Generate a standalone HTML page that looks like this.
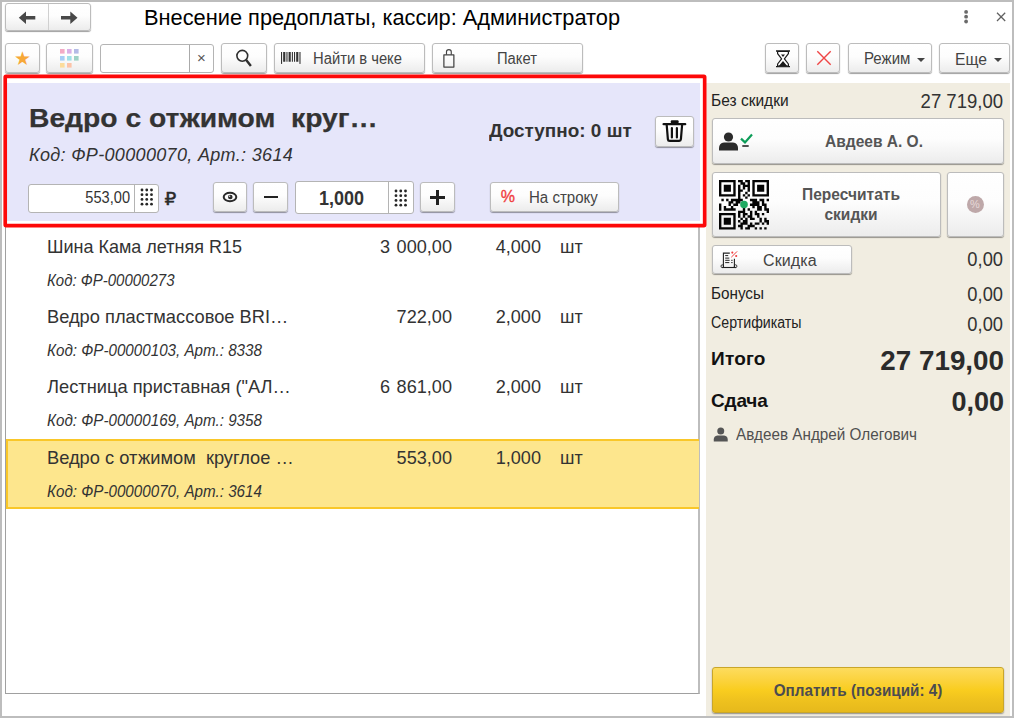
<!DOCTYPE html>
<html lang="ru">
<head>
<meta charset="utf-8">
<title>Внесение предоплаты</title>
<style>
html,body{margin:0;padding:0;}
body{width:1014px;height:718px;overflow:hidden;background:#fff;font-family:"Liberation Sans",Arial,sans-serif;color:#333;position:relative;}
.abs{position:absolute;}
#frame{position:absolute;left:0;top:0;width:1014px;height:718px;box-sizing:border-box;border-style:solid;border-color:#bdbdbd;border-width:2px 2px 2px 2px;z-index:50;pointer-events:none;}
.btn{position:absolute;box-sizing:border-box;border:1px solid #bcbcbc;border-radius:3px;background:linear-gradient(#ffffff 0%,#fdfdfd 45%,#ececec 100%);box-shadow:0 1px 1px rgba(0,0,0,.38);}
.inp{position:absolute;box-sizing:border-box;border:1px solid #b4b4b4;border-radius:3px;background:#fff;}
.t{position:absolute;white-space:pre;line-height:1;}
.r{text-align:right;}
svg{position:absolute;overflow:visible;}
</style>
</head>
<body>

<!-- ===== header ===== -->
<div class="btn" style="left:5px;top:2.8px;width:86px;height:28.2px;"></div>
<div class="abs" style="left:48px;top:4px;width:1px;height:26px;background:#d0d0d0;"></div>
<svg style="left:5px;top:4px" width="86" height="27" viewBox="0 0 86 27">
  <path d="M13.8 13.7 L21 7.4 L21 12 L30.3 12 L30.3 15.4 L21 15.4 L21 20 Z" fill="#484848"/>
  <path d="M72.5 13.7 L65.3 7.4 L65.3 12 L56 12 L56 15.4 L65.3 15.4 L65.3 20 Z" fill="#484848"/>
</svg>
<div class="t" style="left:144px;top:7px;font-size:21.8px;color:#000;">Внесение предоплаты, кассир: Администратор</div>
<svg style="left:960px;top:8px" width="50" height="20" viewBox="0 0 50 20">
  <circle cx="6.1" cy="3.9" r="1.9" fill="#6a6a6a"/><circle cx="6.1" cy="8.7" r="1.9" fill="#6a6a6a"/><circle cx="6.1" cy="13.5" r="1.9" fill="#6a6a6a"/>
  <path d="M37 4.7 L45.2 13 M45.2 4.7 L37 13" stroke="#606060" stroke-width="1.25" fill="none"/>
</svg>

<!-- ===== toolbar ===== -->
<div class="btn" style="left:5px;top:43px;width:34.5px;height:29.7px;"></div>
<div class="t" style="left:5px;top:49px;width:35px;text-align:center;font-size:19px;color:#f7a838;font-family:'DejaVu Sans',sans-serif;">★</div>
<div class="btn" style="left:46px;top:43px;width:47px;height:29.7px;"></div>
<svg style="left:60px;top:49px" width="20" height="20" viewBox="0 0 20 20">
  <rect x="0" y="0" width="4.6" height="4.6" fill="#f3abc6"/><rect x="7" y="0" width="4.6" height="4.6" fill="#d9b0e6"/><rect x="14" y="0" width="4.6" height="4.6" fill="#b4bbe6"/>
  <rect x="0" y="7" width="4.6" height="4.6" fill="#a6cdf5"/><rect x="7" y="7" width="4.6" height="4.6" fill="#a0e0e6"/><rect x="14" y="7" width="4.6" height="4.6" fill="#9ed2c6"/>
  <rect x="0" y="14" width="4.6" height="4.6" fill="#fcdc9c"/><rect x="7" y="14" width="4.6" height="4.6" fill="#fcc3a8"/>
</svg>
<div class="inp" style="left:99.5px;top:44px;width:114.5px;height:28.5px;"></div>
<div class="abs" style="left:189px;top:44.5px;width:1px;height:27.5px;background:#aaa;"></div>
<div class="t" style="left:190px;top:50px;width:23px;text-align:center;font-size:15px;color:#555;">×</div>
<div class="btn" style="left:221px;top:43px;width:45.5px;height:29.7px;"></div>
<svg style="left:221px;top:44px" width="46" height="28" viewBox="0 0 46 28">
  <circle cx="21.3" cy="11.8" r="5.4" fill="none" stroke="#2e2e2e" stroke-width="1.6"/>
  <path d="M25.2 16 L29.9 21.9" stroke="#2e2e2e" stroke-width="2.4" fill="none"/>
</svg>
<div class="btn" style="left:273.5px;top:43px;width:151px;height:29.7px;"></div>
<svg style="left:281px;top:52px" width="21.7" height="13" viewBox="0 0 20 12" preserveAspectRatio="none">
  <g fill="#333"><rect x="0" y="0" width="1" height="11"/><rect x="2" y="0" width="2" height="9"/><rect x="5" y="0" width="1" height="9"/><rect x="7" y="0" width="2" height="9"/><rect x="10" y="0" width="1" height="9"/><rect x="12" y="0" width="1" height="9"/><rect x="14" y="0" width="2" height="9"/><rect x="17" y="0" width="1" height="11"/></g>
</svg>
<div class="t" style="left:313px;top:51.1px;font-size:16px;color:#444;transform:scaleX(.923);transform-origin:0 0;">Найти в чеке</div>
<div class="btn" style="left:431.5px;top:43px;width:151.5px;height:29.7px;"></div>
<svg style="left:442px;top:48px" width="14.8" height="20.8" viewBox="0 0 14 20">
  <path d="M1.7 6.6 H11.3 V18.3 H1.7 Z" fill="none" stroke="#444" stroke-width="1.2" stroke-linejoin="round"/>
  <path d="M4.2 6.4 V3.6 Q4.2 1.5 6.5 1.5 Q8.8 1.5 8.8 3.6 V6.4" fill="none" stroke="#444" stroke-width="1.1"/>
</svg>
<div class="t" style="left:496.5px;top:51.1px;font-size:16px;color:#444;transform:scaleX(.923);transform-origin:0 0;">Пакет</div>

<div class="btn" style="left:765.2px;top:43px;width:34px;height:29.7px;"></div>
<svg style="left:766px;top:44px" width="34" height="28" viewBox="0 0 34 28">
  <path d="M10 7 H24 M10 22.6 H24" stroke="#1a1a1a" stroke-width="1.4" fill="none"/>
  <path d="M11.6 7.5 V9.6 L15.6 14.8 L11.6 20 V22.2 H22.4 V20 L18.4 14.8 L22.4 9.6 V7.5 Z" fill="#fff" stroke="#1a1a1a" stroke-width="1.2" stroke-linejoin="round"/>
  <path d="M15 10.6 H19 L17 13 Z M12.8 22 L17 17 L21.2 22 Z" fill="#1a1a1a"/>
</svg>
<div class="btn" style="left:806.4px;top:43px;width:34px;height:29.7px;"></div>
<svg style="left:807px;top:44px" width="34" height="28" viewBox="0 0 34 28">
  <path d="M10.3 7.3 L23.7 20.7 M23.7 7.3 L10.3 20.7" stroke="#ef4545" stroke-width="1.4" fill="none"/>
</svg>
<div class="btn" style="left:847.6px;top:43px;width:84.4px;height:29.7px;"></div>
<div class="t" style="left:864px;top:51.1px;font-size:16px;color:#444;transform:scaleX(.94);transform-origin:0 0;">Режим</div>
<div class="abs" style="left:917px;top:57.5px;width:0;height:0;border-left:4px solid transparent;border-right:4px solid transparent;border-top:4px solid #444;"></div>
<div class="btn" style="left:939.3px;top:43px;width:70.3px;height:29.7px;"></div>
<div class="t" style="left:954.8px;top:51px;font-size:16.5px;color:#444;transform:scaleX(.95);transform-origin:0 0;">Еще</div>
<div class="abs" style="left:994px;top:57.5px;width:0;height:0;border-left:4px solid transparent;border-right:4px solid transparent;border-top:4px solid #444;"></div>

<!-- ===== current item panel ===== -->
<div class="abs" style="left:6px;top:82.7px;width:693.8px;height:138.2px;background:#e6e6fa;"></div>
<div class="t" style="left:29px;top:106px;font-size:25px;font-weight:bold;transform:scaleX(1.13);transform-origin:0 0;color:#333;-webkit-text-stroke:.25px #333;">Ведро с отжимом  круг…</div>
<div class="t" style="left:29px;top:146px;font-size:18px;font-style:italic;letter-spacing:.33px;color:#333;">Код: ФР-00000070, Арт.: 3614</div>
<div class="t" style="left:489px;top:122px;font-size:18px;font-weight:bold;transform:scaleX(1.052);transform-origin:0 0;color:#333;">Доступно: 0 шт</div>
<div class="btn" style="left:655px;top:116px;width:39px;height:31px;"></div>
<svg style="left:655px;top:116px" width="39" height="31" viewBox="0 0 39 31">
  <path d="M8.6 8.2 H30.2" stroke="#111" stroke-width="2.3" stroke-linecap="round" fill="none"/>
  <rect x="15.8" y="4.3" width="7.8" height="3.2" rx="1" fill="#111"/>
  <path d="M11.7 9 L12.9 23.3 Q13 24.8 14.6 24.8 H24.2 Q25.8 24.8 25.9 23.3 L27.1 9" stroke="#111" stroke-width="2.2" fill="none"/>
  <path d="M16.9 12 V21.4 M21.9 12 V21.4" stroke="#111" stroke-width="2.2" stroke-linecap="round" fill="none"/>
</svg>

<div class="inp" style="left:28px;top:184px;width:131px;height:29px;"></div>
<div class="abs" style="left:134px;top:185px;width:1px;height:27px;background:#b4b4b4;"></div>
<div class="t r" style="left:40px;top:189.3px;width:90px;font-size:16.5px;color:#333;transform:scaleX(.885);transform-origin:100% 0;">553,00</div>
<svg style="left:139.9px;top:188.4px" width="14" height="19" viewBox="0 0 14 19"><g fill="#262626"><circle cx="2.00" cy="2.00" r="1.4"/><circle cx="6.75" cy="2.00" r="1.4"/><circle cx="11.50" cy="2.00" r="1.4"/><circle cx="2.00" cy="6.72" r="1.4"/><circle cx="6.75" cy="6.72" r="1.4"/><circle cx="11.50" cy="6.72" r="1.4"/><circle cx="2.00" cy="11.44" r="1.4"/><circle cx="6.75" cy="11.44" r="1.4"/><circle cx="11.50" cy="11.44" r="1.4"/><circle cx="2.00" cy="16.16" r="1.4"/><circle cx="6.75" cy="16.16" r="1.4"/><circle cx="11.50" cy="16.16" r="1.4"/></g></svg>
<div class="t" style="left:164.5px;top:189.5px;font-size:18.5px;color:#2a2a2a;-webkit-text-stroke:.5px #2a2a2a;font-family:'DejaVu Sans',sans-serif;">₽</div>

<div class="btn" style="left:212.7px;top:182px;width:34.6px;height:30px;"></div>
<svg style="left:213px;top:182px" width="35" height="30" viewBox="0 0 35 30">
  <ellipse cx="17" cy="15" rx="6.3" ry="4.2" fill="none" stroke="#2a2a2a" stroke-width="2"/>
  <circle cx="17.3" cy="15" r="2.3" fill="#2a2a2a"/><circle cx="16.6" cy="14.2" r=".8" fill="#ddd"/>
</svg>
<div class="btn" style="left:253px;top:182px;width:35px;height:30px;"></div>
<div class="abs" style="left:263.7px;top:195.8px;width:14.3px;height:2.6px;background:#222;"></div>
<div class="inp" style="left:294.6px;top:181.2px;width:119.3px;height:33.2px;"></div>
<div class="abs" style="left:388.2px;top:182px;width:1px;height:31.5px;background:#b4b4b4;"></div>
<div class="t" style="left:295px;top:187.6px;width:93px;text-align:center;font-size:20px;font-weight:bold;color:#333;transform:scaleX(.9);">1,000</div>
<svg style="left:394.0px;top:188.5px" width="14" height="19" viewBox="0 0 14 19"><g fill="#262626"><circle cx="2.00" cy="2.00" r="1.4"/><circle cx="6.75" cy="2.00" r="1.4"/><circle cx="11.50" cy="2.00" r="1.4"/><circle cx="2.00" cy="6.72" r="1.4"/><circle cx="6.75" cy="6.72" r="1.4"/><circle cx="11.50" cy="6.72" r="1.4"/><circle cx="2.00" cy="11.44" r="1.4"/><circle cx="6.75" cy="11.44" r="1.4"/><circle cx="11.50" cy="11.44" r="1.4"/><circle cx="2.00" cy="16.16" r="1.4"/><circle cx="6.75" cy="16.16" r="1.4"/><circle cx="11.50" cy="16.16" r="1.4"/></g></svg>
<div class="btn" style="left:420px;top:182px;width:35px;height:30px;"></div>
<div class="abs" style="left:430.3px;top:196.4px;width:14.4px;height:2.4px;background:#222;"></div>
<div class="abs" style="left:436.3px;top:190.4px;width:2.4px;height:14.4px;background:#222;"></div>
<div class="btn" style="left:490px;top:182px;width:128.6px;height:30.2px;"></div>
<div class="t" style="left:500.7px;top:189.4px;font-size:16px;color:#f04040;-webkit-text-stroke:.35px #f04040;">%</div>
<div class="t" style="left:528.5px;top:189.9px;font-size:16px;color:#444;transform:scaleX(.94);transform-origin:0 0;">На строку</div>

<!-- ===== table ===== -->
<div class="abs" style="left:5px;top:221px;width:695.2px;height:473px;box-sizing:border-box;border:1px solid #a0a0a0;border-right:2.2px solid #bdbdbd;border-top:none;"></div>
<div class="abs" style="left:6px;top:438.5px;width:693px;height:70.2px;box-sizing:border-box;background:#fde68d;border:2px solid #f9c729;border-right:none;"></div>

<div class="t" style="left:47px;top:237.10px;font-size:19px;transform:scaleX(0.947);transform-origin:0 0;">Шина Кама летняя R15</div>
<div class="t" style="left:47px;top:272.96px;font-size:16px;font-style:italic;transform:scaleX(0.9375);transform-origin:0 0;">Код: ФР-00000273</div>
<div class="t r" style="word-spacing:1.5px;left:352px;top:237.10px;width:100px;font-size:19px;transform:scaleX(.953);transform-origin:100% 0;">3 000,00</div>
<div class="t r" style="left:441px;top:237.10px;width:100px;font-size:19px;transform:scaleX(.953);transform-origin:100% 0;">4,000</div>
<div class="t" style="left:560px;top:237.10px;font-size:19px;transform:scaleX(0.947);transform-origin:0 0;">шт</div>

<div class="t" style="left:47px;top:307.10px;font-size:19px;transform:scaleX(0.962);transform-origin:0 0;">Ведро пластмассовое BRI…</div>
<div class="t" style="left:47px;top:342.96px;font-size:16px;font-style:italic;transform:scaleX(0.9490);transform-origin:0 0;">Код: ФР-00000103, Арт.: 8338</div>
<div class="t r" style="word-spacing:1.5px;left:352px;top:307.10px;width:100px;font-size:19px;transform:scaleX(.953);transform-origin:100% 0;">722,00</div>
<div class="t r" style="left:441px;top:307.10px;width:100px;font-size:19px;transform:scaleX(.953);transform-origin:100% 0;">2,000</div>
<div class="t" style="left:560px;top:307.10px;font-size:19px;transform:scaleX(0.947);transform-origin:0 0;">шт</div>

<div class="t" style="left:47px;top:377.10px;font-size:19px;transform:scaleX(0.962);transform-origin:0 0;">Лестница приставная ("АЛ…</div>
<div class="t" style="left:47px;top:412.96px;font-size:16px;font-style:italic;transform:scaleX(0.9490);transform-origin:0 0;">Код: ФР-00000169, Арт.: 9358</div>
<div class="t r" style="word-spacing:1.5px;left:352px;top:377.10px;width:100px;font-size:19px;transform:scaleX(.953);transform-origin:100% 0;">6 861,00</div>
<div class="t r" style="left:441px;top:377.10px;width:100px;font-size:19px;transform:scaleX(.953);transform-origin:100% 0;">2,000</div>
<div class="t" style="left:560px;top:377.10px;font-size:19px;transform:scaleX(0.947);transform-origin:0 0;">шт</div>

<div class="t" style="left:47px;top:447.5px;font-size:19px;transform:scaleX(0.962);transform-origin:0 0;">Ведро с отжимом  круглое …</div>
<div class="t" style="left:47px;top:483.96px;font-size:16px;font-style:italic;transform:scaleX(0.9490);transform-origin:0 0;">Код: ФР-00000070, Арт.: 3614</div>
<div class="t r" style="word-spacing:1.5px;left:352px;top:448.10px;width:100px;font-size:19px;transform:scaleX(.953);transform-origin:100% 0;">553,00</div>
<div class="t r" style="left:441px;top:448.10px;width:100px;font-size:19px;transform:scaleX(.953);transform-origin:100% 0;">1,000</div>
<div class="t" style="left:560px;top:448.10px;font-size:19px;transform:scaleX(0.947);transform-origin:0 0;">шт</div>

<!-- ===== right panel ===== -->
<div class="abs" style="left:705.7px;top:82.8px;width:304.3px;height:633.2px;background:#f1ede1;"></div>
<div class="t" style="left:710.9px;top:93px;font-size:16px;color:#222;transform:scaleX(.97);transform-origin:0 0;">Без скидки</div>
<div class="t r" style="left:853.4px;top:90.5px;width:150px;font-size:20px;transform:scaleX(.926);transform-origin:100% 0;">27 719,00</div>

<div class="btn" style="left:711.6px;top:118px;width:292.2px;height:46px;"></div>
<svg style="left:718px;top:130px" width="36" height="22" viewBox="0 0 36 22">
  <circle cx="10.5" cy="7" r="4.6" fill="#2b2b2b"/>
  <path d="M1 20.5 V18 Q1 13 6 12.4 H15 Q20 13 20 18 V20.5 Z" fill="#2b2b2b"/>
  <path d="M23 8.6 L27 12.4 L34 4.6" stroke="#0c9d58" stroke-width="2.2" fill="none"/>
  <path d="M24.3 16 H30.7" stroke="#333" stroke-width="1.7" fill="none"/>
</svg>
<div class="t" style="left:744px;top:132.5px;width:260px;text-align:center;font-size:17px;font-weight:bold;color:#555;transform:scaleX(.913);">Авдеев А. О.</div>

<div class="btn" style="left:711.6px;top:172.3px;width:229.2px;height:64.5px;"></div>
<div class="t" style="left:761px;top:186.4px;width:180px;text-align:center;font-size:17px;font-weight:bold;color:#555;transform:scaleX(.913);">Пересчитать</div>
<div class="t" style="left:761px;top:205.5px;width:180px;text-align:center;font-size:17px;font-weight:bold;color:#555;transform:scaleX(.913);">скидки</div>
<svg style="left:719px;top:180px" width="50" height="49.5" viewBox="0 0 21 21" preserveAspectRatio="none"><path d="M0 0h7v1h-7zM8 0h2v1h-2zM11 0h2v1h-2zM14 0h7v1h-7zM0 1h1v1h-1zM6 1h1v1h-1zM9 1h2v1h-2zM12 1h1v1h-1zM14 1h1v1h-1zM20 1h1v1h-1zM0 2h1v1h-1zM2 2h3v1h-3zM6 2h1v1h-1zM8 2h1v1h-1zM10 2h3v1h-3zM14 2h1v1h-1zM16 2h3v1h-3zM20 2h1v1h-1zM0 3h1v1h-1zM2 3h3v1h-3zM6 3h1v1h-1zM8 3h1v1h-1zM10 3h1v1h-1zM12 3h1v1h-1zM14 3h1v1h-1zM16 3h3v1h-3zM20 3h1v1h-1zM0 4h1v1h-1zM2 4h3v1h-3zM6 4h1v1h-1zM8 4h2v1h-2zM12 4h1v1h-1zM14 4h1v1h-1zM16 4h3v1h-3zM20 4h1v1h-1zM0 5h1v1h-1zM6 5h1v1h-1zM8 5h1v1h-1zM11 5h1v1h-1zM14 5h1v1h-1zM20 5h1v1h-1zM0 6h7v1h-7zM8 6h1v1h-1zM10 6h1v1h-1zM12 6h1v1h-1zM14 6h7v1h-7zM8 7h1v1h-1zM11 7h1v1h-1zM1 8h1v1h-1zM3 8h1v1h-1zM5 8h5v1h-5zM13 8h3v1h-3zM17 8h2v1h-2zM20 8h1v1h-1zM4 9h2v1h-2zM7 9h2v1h-2zM14 9h3v1h-3zM18 9h1v1h-1zM0 10h1v1h-1zM4 10h1v1h-1zM6 10h2v1h-2zM13 10h4v1h-4zM18 10h2v1h-2zM0 11h1v1h-1zM2 11h1v1h-1zM5 11h1v1h-1zM10 11h1v1h-1zM14 11h1v1h-1zM16 11h2v1h-2zM19 11h1v1h-1zM0 12h1v1h-1zM2 12h5v1h-5zM10 12h1v1h-1zM12 12h1v1h-1zM16 12h2v1h-2zM19 12h2v1h-2zM8 13h3v1h-3zM13 13h1v1h-1zM15 13h1v1h-1zM20 13h1v1h-1zM0 14h7v1h-7zM8 14h1v1h-1zM10 14h2v1h-2zM13 14h1v1h-1zM15 14h2v1h-2zM18 14h1v1h-1zM0 15h1v1h-1zM6 15h1v1h-1zM8 15h1v1h-1zM10 15h1v1h-1zM12 15h2v1h-2zM16 15h1v1h-1zM0 16h1v1h-1zM2 16h3v1h-3zM6 16h1v1h-1zM9 16h1v1h-1zM11 16h1v1h-1zM13 16h2v1h-2zM17 16h1v1h-1zM19 16h1v1h-1zM0 17h1v1h-1zM2 17h3v1h-3zM6 17h1v1h-1zM8 17h1v1h-1zM10 17h2v1h-2zM17 17h1v1h-1zM19 17h2v1h-2zM0 18h1v1h-1zM2 18h3v1h-3zM6 18h1v1h-1zM9 18h3v1h-3zM13 18h1v1h-1zM15 18h2v1h-2zM18 18h1v1h-1zM20 18h1v1h-1zM0 19h1v1h-1zM6 19h1v1h-1zM8 19h2v1h-2zM12 19h3v1h-3zM0 20h7v1h-7zM9 20h1v1h-1zM11 20h2v1h-2zM15 20h1v1h-1zM17 20h1v1h-1zM19 20h1v1h-1z" fill="#050505"/><circle cx="10.5" cy="10.4" r="1.6" fill="#1faa62"/></svg>

<div class="btn" style="left:947px;top:172.3px;width:56.8px;height:64.5px;"></div>
<div class="abs" style="left:966.5px;top:195.5px;width:17px;height:17px;border-radius:50%;background:#bea8a9;"></div>
<div class="t" style="left:966.5px;top:198.6px;width:17px;text-align:center;font-size:11px;color:#e6d8d8;">%</div>

<div class="btn" style="left:711.6px;top:245px;width:140px;height:29.3px;"></div>
<svg style="left:720px;top:251px" width="18" height="18" viewBox="0 0 18 18">
  <path d="M9.8 2.1 H3.4 V16.2 M14.4 7.8 V16.2" stroke="#222" stroke-width="1.1" fill="none"/>
  <path d="M2.2 16.5 H15.8" stroke="#222" stroke-width="1.1" fill="none"/>
  <ellipse cx="2.3" cy="15.2" rx="1.3" ry="1.4" fill="none" stroke="#222" stroke-width=".9"/>
  <ellipse cx="15.6" cy="15.2" rx="1.3" ry="1.4" fill="none" stroke="#222" stroke-width=".9"/>
  <path d="M5.2 4.6 H8.2 M5.2 7.1 H9.3 M5.2 9.3 H9.6 M5.2 11.6 H9.3 M11.2 9.3 H12.6 M11.2 11.6 H12.6" stroke="#222" stroke-width="1" fill="none"/>
  <path d="M17.1 .4 L11.3 6.2" stroke="#f03c3c" stroke-width="1" fill="none"/>
  <circle cx="12.3" cy="1.6" r="1.05" fill="#f03c3c"/><circle cx="16.2" cy="5" r="1.05" fill="#f03c3c"/>
</svg>
<div class="t" style="left:763px;top:252.5px;font-size:16px;color:#444;letter-spacing:.1px;">Скидка</div>
<div class="t r" style="left:903.4px;top:249.4px;width:100px;font-size:20px;transform:scaleX(.915);transform-origin:100% 0;">0,00</div>

<div class="t" style="left:711.1px;top:285.8px;font-size:16px;color:#222;transform:scaleX(.953);transform-origin:0 0;">Бонусы</div>
<div class="t r" style="left:903.4px;top:283.6px;width:100px;font-size:20px;transform:scaleX(.915);transform-origin:100% 0;">0,00</div>
<div class="t" style="left:711.1px;top:315.3px;font-size:16px;color:#222;transform:scaleX(.887);transform-origin:0 0;">Сертификаты</div>
<div class="t r" style="left:903.4px;top:313.5px;width:100px;font-size:20px;transform:scaleX(.915);transform-origin:100% 0;">0,00</div>

<div class="t" style="left:711.1px;top:349px;font-size:19px;font-weight:bold;color:#111;letter-spacing:.2px;">Итого</div>
<div class="t r" style="left:803.5px;top:345.7px;width:200px;font-size:28.5px;font-weight:bold;color:#2b2b2b;transform:scaleX(.975);transform-origin:100% 0;">27 719,00</div>
<div class="t" style="left:711.1px;top:390.7px;font-size:19px;font-weight:bold;color:#111;letter-spacing:-.2px;">Сдача</div>
<div class="t r" style="left:803.5px;top:388.3px;width:200px;font-size:28px;font-weight:bold;color:#2b2b2b;transform:scaleX(.965);transform-origin:100% 0;">0,00</div>

<svg style="left:713.3px;top:427px" width="15.5" height="15" viewBox="0 0 16 15" preserveAspectRatio="none">
  <circle cx="8" cy="4" r="3.6" fill="#555"/>
  <path d="M0.8 14.5 V12.5 Q0.8 8.8 4.5 8.4 H11.5 Q15.2 8.8 15.2 12.5 V14.5 Z" fill="#555"/>
</svg>
<div class="t" style="left:736px;top:426.7px;font-size:16px;color:#505050;transform:scaleX(.954);transform-origin:0 0;">Авдеев Андрей Олегович</div>

<div class="abs" style="left:712px;top:667px;width:292px;height:46px;box-sizing:border-box;border:1px solid #c9a62a;border-radius:3px;background:linear-gradient(#fddc5e 0%,#fbd23a 30%,#f9cd1f 50%,#eec11e 75%,#e6b91c 100%);box-shadow:0 1px 1.5px rgba(0,0,0,.4);"></div>
<div class="t" style="left:712px;top:682.4px;width:292px;text-align:center;font-size:17px;font-weight:bold;color:#4c4c50;transform:scaleX(.897);">Оплатить (позиций: 4)</div>

<!-- ===== red annotation ===== -->
<svg style="left:0;top:0;z-index:5" width="1014" height="718" viewBox="0 0 1014 718"><rect x="5.22" y="76.42" width="699.45" height="149.25" rx=".8" fill="none" stroke="#fd0808" stroke-width="3.65"/></svg>
<div class="abs" style="left:700px;top:78px;width:3px;height:146px;background:#fff;"></div>
<div class="abs" style="left:7px;top:78px;width:696px;height:4px;background:#fff;"></div>
<div class="abs" style="left:7px;top:221px;width:696px;height:3px;background:#fff;"></div>

<div id="frame"></div>
</body>
</html>
